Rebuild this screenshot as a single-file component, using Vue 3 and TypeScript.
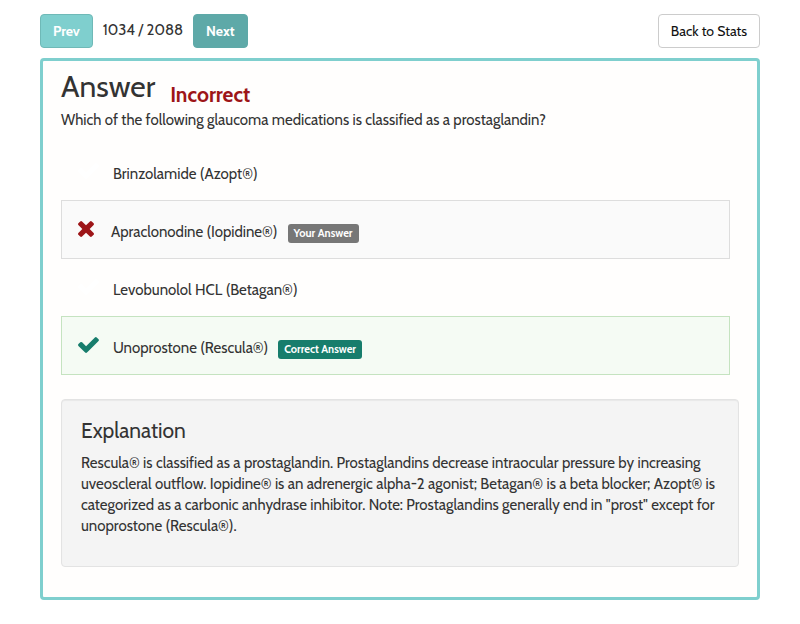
<script setup lang="ts">
interface Option {
  text: string
  state: 'plain' | 'chosen' | 'correct'
  label?: string
}

const current = 1034
const total = 2088
const question = 'Which of the following glaucoma medications is classified as a prostaglandin?'
const options: Option[] = [
  { text: 'Brinzolamide (Azopt®)', state: 'plain' },
  { text: 'Apraclonodine (Iopidine®)', state: 'chosen', label: 'Your Answer' },
  { text: 'Levobunolol HCL (Betagan®)', state: 'plain' },
  { text: 'Unoprostone (Rescula®)', state: 'correct', label: 'Correct Answer' },
]
const explanation =
  'Rescula® is classified as a prostaglandin. Prostaglandins decrease intraocular pressure by increasing uveoscleral outflow. Iopidine® is an adrenergic alpha-2 agonist; Betagan® is a beta blocker; Azopt® is categorized as a carbonic anhydrase inhibitor. Note: Prostaglandins generally end in "prost" except for unoprostone (Rescula®).'
</script>

<template>
  <main class="page">
    <nav class="toolbar">
      <button type="button" class="btn prev">Prev</button>
      <span class="count">{{ current }} / {{ total }}</span>
      <button type="button" class="btn next">Next</button>
      <button type="button" class="btn back">Back to Stats</button>
    </nav>

    <section class="panel">
      <header class="heading">
        <h1>Answer</h1>
        <strong class="result">Incorrect</strong>
      </header>
      <p class="question">{{ question }}</p>

      <ul class="options">
        <li v-for="option in options" :key="option.text" class="option" :class="option.state">
          <span class="mark">
            <svg v-if="option.state === 'chosen'" class="cross" viewBox="302 366 1188 1188" aria-hidden="true">
              <path d="M1490 1322q0 40-28 68l-136 136q-28 28-68 28t-68-28l-294-294-294 294q-28 28-68 28t-68-28l-136-136q-28-28-28-68t28-68l294-294-294-294q-28-28-28-68t28-68l136-136q28-28 68-28t68 28l294 294 294-294q28-28 68-28t68 28l136 136q28 28 28 68t-28 68l-294 294 294 294q28 28 28 68z" />
            </svg>
            <svg v-else class="check" viewBox="121 334 1550 1188" aria-hidden="true">
              <path d="M1671 566q0 40-28 68l-724 724-136 136q-28 28-68 28t-68-28l-136-136-362-362q-28-28-28-68t28-68l136-136q28-28 68-28t68 28l294 295 656-657q28-28 68-28t68 28l136 136q28 28 28 68z" />
            </svg>
          </span>
          <span class="text">{{ option.text }}</span>
          <span v-if="option.label" class="label">{{ option.label }}</span>
        </li>
      </ul>

      <article class="explanation">
        <h2>Explanation</h2>
        <p>{{ explanation }}</p>
      </article>
    </section>
  </main>
</template>

<style>
body {
  margin: 0;
  background: #fff;
}
</style>

<style scoped>
.page {
  box-sizing: border-box;
  padding: 14px 40px 24px;
  font-family: Cabin, Lato, "Liberation Sans", sans-serif;
  font-size: 15px;
  line-height: 21px;
  color: #333;
}
.toolbar {
  display: flex;
  align-items: center;
  margin-bottom: 10px;
}
.btn {
  box-sizing: border-box;
  height: 34px;
  padding: 0 12px;
  border: 1px solid;
  border-radius: 4px;
  font-family: inherit;
  font-size: 14px;
  line-height: 20px;
  cursor: pointer;
}
.prev,
.next {
  color: #fff;
  font-weight: 700;
}
.prev {
  background: #7fcfce;
  border-color: #6fb9b7;
}
.next {
  background: #5ea9a8;
  border-color: #5ea9a8;
}
.back {
  margin-left: auto;
  background: #fff;
  border-color: #ccc;
  color: #111;
}
.count {
  margin: 0 10px;
  padding-bottom: 2px;
}
.panel {
  padding: 10px 18px 30px;
  border: 3px solid #7fcfce;
  border-radius: 4px;
  background: #fffefd;
}
.heading {
  display: flex;
  align-items: flex-start;
  gap: 15px;
  margin-bottom: 3px;
}
h1 {
  margin: 0;
  font-size: 30px;
  font-weight: 400;
  line-height: 32px;
}
.result {
  padding-top: 12px;
  font-size: 21px;
  line-height: 24px;
  color: #9d1518;
}
.question {
  margin: 0 0 11px;
}
.options {
  margin: 0 9px 24px 0;
  padding: 0;
  list-style: none;
}
.option {
  display: flex;
  align-items: center;
  box-sizing: border-box;
  min-height: 59px;
  padding: 14px 16px;
  border: 1px solid transparent;
}
.option + .option {
  margin-top: -1px;
}
.chosen {
  background: #fafafa;
  border-color: #ddd;
}
.correct {
  background: #f5fbf4;
  border-color: #c5e3c0;
}
.mark {
  display: flex;
  width: 35px;
  padding-bottom: 2px;
  color: #fff;
}
.chosen .mark {
  width: 33px;
  color: #9d1518;
}
.correct .mark {
  color: #177d6c;
}
.mark svg {
  height: 16px;
  fill: currentColor;
}
.cross {
  width: 16px;
}
.check {
  width: 21px;
}
.text {
  padding-top: 6px;
}
.label {
  margin: 8px 0 0 10px;
  padding: 0 6px;
  border-radius: 3px;
  background: #777;
  color: #fff;
  font-size: 11px;
  font-weight: 700;
  line-height: 19px;
}
.correct .label {
  background: #177d6c;
}
.explanation {
  padding: 19px 19px 29px;
  border: 1px solid #e3e3e3;
  border-radius: 4px;
  background: #f4f4f4;
  box-shadow: inset 0 1px 1px rgba(0, 0, 0, 0.05);
}
h2 {
  margin: 0 0 10px;
  font-size: 21px;
  font-weight: 400;
  line-height: 24px;
}
.explanation p {
  margin: 0;
}
</style>
